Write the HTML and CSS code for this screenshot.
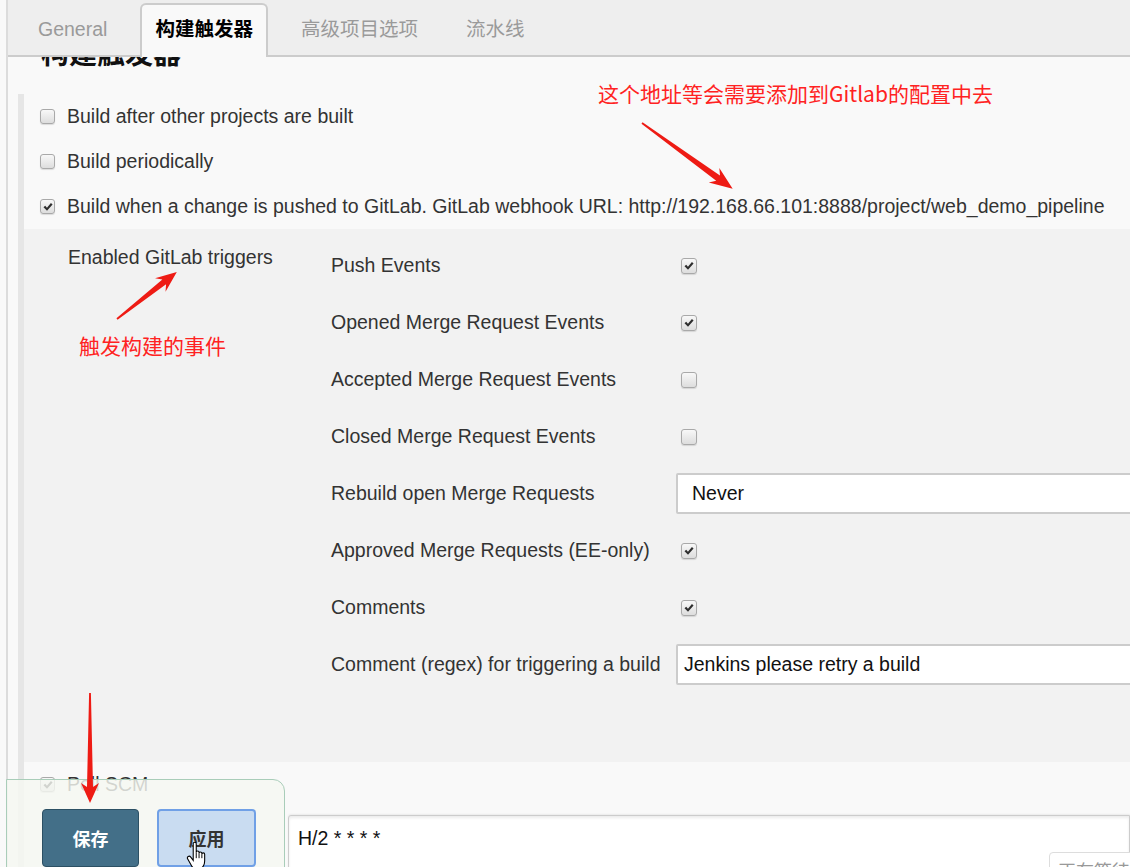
FILE: index.html
```html
<!DOCTYPE html>
<html lang="zh-CN">
<head>
<meta charset="utf-8">
<title>构建触发器</title>
<link rel="stylesheet" href="styles.css">
</head>
<body>
<div class="page">
  <div class="tabbar">
    <span class="tab">General</span>
    <span class="tab active">构建触发器</span>
    <span class="tab">高级项目选项</span>
    <span class="tab">流水线</span>
  </div>
  <h2 class="heading">构建触发器</h2>
  <div class="section">
    <div class="row"><span class="cb"></span><span>Build after other projects are built</span></div>
    <div class="row"><span class="cb"></span><span>Build periodically</span></div>
    <div class="row"><span class="cb"><svg viewBox="0 0 16 16"><path d="M2 8.4 L4.3 6.3 L6.6 8.9 L11.9 2.6 L14.1 4.6 L6.7 13 Z"/></svg></span><span>Build when a change is pushed to GitLab. GitLab webhook URL: http://192.168.66.101:8888/project/web_demo_pipeline</span></div>
    <div class="nested">
      <div class="side-label">Enabled GitLab triggers</div>
      <div class="lbl">Push Events</div>
      <div class="ctl"><span class="cb"><svg viewBox="0 0 16 16"><path d="M2 8.4 L4.3 6.3 L6.6 8.9 L11.9 2.6 L14.1 4.6 L6.7 13 Z"/></svg></span></div>
      <div class="lbl">Opened Merge Request Events</div>
      <div class="ctl"><span class="cb"><svg viewBox="0 0 16 16"><path d="M2 8.4 L4.3 6.3 L6.6 8.9 L11.9 2.6 L14.1 4.6 L6.7 13 Z"/></svg></span></div>
      <div class="lbl">Accepted Merge Request Events</div>
      <div class="ctl"><span class="cb"></span></div>
      <div class="lbl">Closed Merge Request Events</div>
      <div class="ctl"><span class="cb"></span></div>
      <div class="lbl">Rebuild open Merge Requests</div>
      <div class="ctl"><div class="select">Never</div></div>
      <div class="lbl">Approved Merge Requests (EE-only)</div>
      <div class="ctl"><span class="cb"><svg viewBox="0 0 16 16"><path d="M2 8.4 L4.3 6.3 L6.6 8.9 L11.9 2.6 L14.1 4.6 L6.7 13 Z"/></svg></span></div>
      <div class="lbl">Comments</div>
      <div class="ctl"><span class="cb"><svg viewBox="0 0 16 16"><path d="M2 8.4 L4.3 6.3 L6.6 8.9 L11.9 2.6 L14.1 4.6 L6.7 13 Z"/></svg></span></div>
      <div class="lbl">Comment (regex) for triggering a build</div>
      <div class="ctl"><div class="input">Jenkins please retry a build</div></div>
    </div>
    <div class="row"><span class="cb"><svg viewBox="0 0 16 16"><path d="M2 8.4 L4.3 6.3 L6.6 8.9 L11.9 2.6 L14.1 4.6 L6.7 13 Z"/></svg></span><span>Poll SCM</span></div>
    <div class="schedule"><div class="textarea">H/2 * * * *</div></div>
  </div>
</div>

<div class="bottom-bar">
  <button class="btn save">保存</button>
  <button class="btn apply">应用</button>
</div>

<svg class="cursor" viewBox="0 0 20 25" width="22" height="27">
  <path d="M6.5 1.6 C6.5 0.8 7.1 0.3 7.9 0.3 C8.7 0.3 9.3 0.8 9.3 1.6 V9.5 C9.3 8.8 9.9 8.3 10.6 8.3 C11.3 8.3 11.9 8.8 11.9 9.5 V10.4 C11.9 9.7 12.5 9.2 13.2 9.2 C13.9 9.2 14.5 9.7 14.5 10.4 V11.3 C14.5 10.6 15.1 10.1 15.8 10.1 C16.5 10.1 17.1 10.6 17.1 11.3 V17.5 C17.1 21 15.3 24.5 12 24.5 H8.8 C6.8 24.5 5.7 23.4 4.8 21.8 L1.3 15.6 C0.8 14.8 1.1 13.9 1.9 13.4 C2.7 12.9 3.6 13.2 4.2 14 L6.5 17 Z" fill="#fff" stroke="#000" stroke-width="1"/>
  <path d="M9.3 9.5 V15 M11.9 10.4 V15 M14.5 11.3 V15" stroke="#000" stroke-width="0.9" fill="none"/>
</svg>

<div class="waiting">正在等待…</div>

<div class="note note-url">这个地址等会需要添加到Gitlab的配置中去</div>
<div class="note note-trigger">触发构建的事件</div>

<svg class="arrows" width="1130" height="867" viewBox="0 0 1130 867">
  <polygon transform="translate(642,123) rotate(35.95)" points="0,-0.9 94,-3.2 89,-9 112,0 89,9 94,3.2 0,0.9"/>
  <polygon transform="translate(117,319) rotate(-38.1)" points="0,-0.9 60,-3 55,-8.5 76,0 55,8.5 60,3 0,0.9"/>
  <polygon transform="translate(90,693) rotate(90)" points="0,-0.9 94,-3 90,-9 110,0 90,9 94,3 0,0.9"/>
</svg>
</body>
</html>
```

FILE: styles.css
```css
html, body {
  margin: 0;
  height: 100%;
  overflow: hidden;
}

body {
  position: relative;
  background: #f9f9f9;
  color: #333;
  font-family: "Liberation Sans", Arial, "Noto Sans CJK SC", sans-serif;
  font-size: 19.5px;
}

.page {
  margin-left: 6px;
  border-left: 2px solid #dcdcdc;
  min-height: 867px;
}

/* ---------- tabs ---------- */
.tabbar {
  position: relative;
  z-index: 2;
  display: flex;
  align-items: flex-end;
  gap: 18px;
  height: 55px;
  padding-left: 15px;
  background: #eee;
  border-bottom: 2px solid #ccc;
}

.tab {
  box-sizing: border-box;
  height: 52px;
  line-height: 52px;
  padding: 0 15px;
  color: #9a9a9a;
  white-space: nowrap;
}

.tab.active {
  height: 54px;
  margin-bottom: -2px;
  padding: 0 13px;
  line-height: 48px;
  background: #f9f9f9;
  border: 2px solid #ccc;
  border-bottom: 0;
  border-radius: 6px 6px 0 0;
  color: #000;
  font-weight: bold;
}

.heading {
  position: relative;
  z-index: 1;
  margin: -18px 0 0;
  padding-left: 33px;
  font-size: 28px;
  line-height: 32px;
  font-weight: bold;
  color: #111;
}

/* ---------- section ---------- */
.section {
  margin: 23px 0 0 10px;
  border-left: 6px solid #e6e6e6;
}

.row {
  display: flex;
  align-items: center;
  gap: 12px;
  height: 45px;
  padding-left: 16px;
  white-space: nowrap;
}

.cb {
  box-sizing: border-box;
  flex: none;
  display: inline-flex;
  align-items: center;
  justify-content: center;
  width: 15px;
  height: 15px;
  border: 1px solid #a9a9a9;
  border-radius: 3px;
  background: linear-gradient(#f8f8f8, #dddddd);
  box-shadow: 0 1px 1px rgba(0, 0, 0, 0.12);
}

.cb svg {
  width: 12px;
  height: 12px;
  fill: #2e2e2e;
}

.nested {
  display: grid;
  grid-template-columns: 263px 345px 1fr;
  grid-auto-rows: 57px;
  padding: 8px 0 69px 44px;
  background: #f2f2f2;
}

.side-label {
  grid-column: 1;
  grid-row: 1 / 9;
  align-self: start;
  padding-top: 9px;
  white-space: nowrap;
}

.lbl {
  grid-column: 2;
  display: flex;
  align-items: center;
  white-space: nowrap;
}

.ctl {
  grid-column: 3;
  display: flex;
  align-items: center;
}

.ctl .cb {
  margin-left: 5px;
  width: 16px;
  height: 16px;
}

.select,
.input {
  box-sizing: border-box;
  flex: none;
  display: flex;
  align-items: center;
  width: 520px;
  height: 41px;
  background: #fff;
  border: 2px solid #ccc;
  border-radius: 2px;
  color: #111;
  white-space: nowrap;
}

.select {
  padding-left: 14px;
}

.input {
  padding-left: 6px;
}

.schedule {
  padding: 8px 0 0 264px;
}

.textarea {
  height: 90px;
  padding: 12px 9px;
  background: #fff;
  border: 1px solid #ccc;
  border-radius: 3px 0 0 0;
  box-shadow: inset 0 2px 3px rgba(0, 0, 0, 0.08), 0 -1px 2px rgba(0, 0, 0, 0.06);
  color: #111;
  line-height: 21px;
}

/* ---------- bottom bar ---------- */
.bottom-bar {
  position: absolute;
  left: 6px;
  top: 779px;
  z-index: 5;
  box-sizing: border-box;
  display: flex;
  align-items: flex-start;
  gap: 18px;
  width: 279px;
  height: 100px;
  padding: 29px 0 0 35px;
  background: rgba(245, 248, 241, 0.82);
  border: 1px solid #a9cdb9;
  border-radius: 0 12px 0 0;
}

.btn {
  box-sizing: border-box;
  height: 58px;
  padding: 0;
  border-radius: 4px;
  font-family: "Noto Sans CJK SC", sans-serif;
  font-size: 18px;
  font-weight: bold;
}

.save {
  width: 97px;
  background: #436f88;
  border: 1px solid #2c5064;
  color: #fff;
}

.apply {
  width: 99px;
  background: #c9dcf1;
  border: 2px solid #70a0e6;
  color: #333;
}

.cursor {
  position: absolute;
  left: 186px;
  top: 842px;
  z-index: 6;
}

.waiting {
  position: absolute;
  left: 1049px;
  top: 852px;
  padding: 4px 8px;
  background: #fff;
  border: 1px solid #ddd;
  border-radius: 4px;
  color: #999;
  white-space: nowrap;
  font-family: "Noto Sans CJK SC", sans-serif;
  font-size: 18px;
}

/* ---------- annotations ---------- */
.note {
  position: absolute;
  z-index: 9;
  color: #ff2222;
  font-family: "Noto Sans CJK SC", sans-serif;
  white-space: nowrap;
}

.note-url {
  left: 598px;
  top: 81px;
  font-size: 21px;
  line-height: 24px;
}

.note-trigger {
  left: 79px;
  top: 333px;
  font-size: 21px;
  line-height: 24px;
}

.arrows {
  position: absolute;
  left: 0;
  top: 0;
  z-index: 10;
  pointer-events: none;
  fill: #ee1b14;
}
```
